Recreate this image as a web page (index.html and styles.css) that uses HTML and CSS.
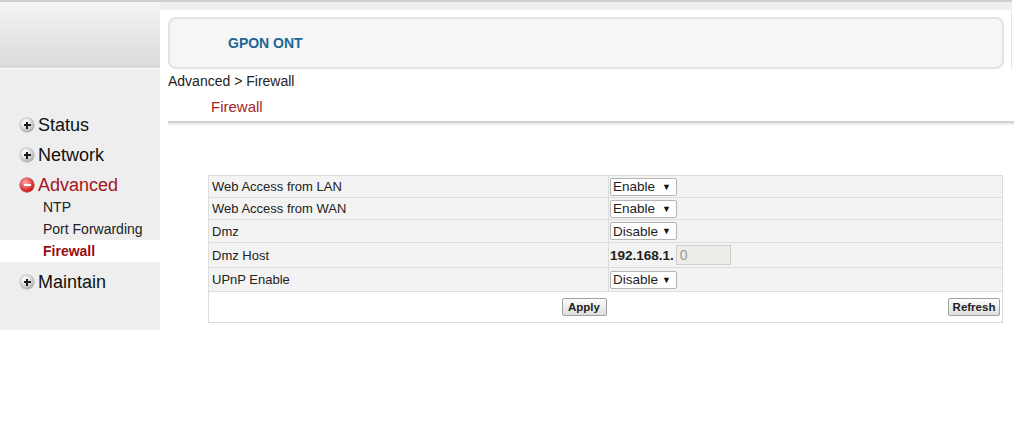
FILE: index.html
```html
<!DOCTYPE html>
<html lang="en">
<head>
  <meta charset="UTF-8" />
  <title>GPON ONT - Firewall</title>
  <link rel="stylesheet" href="styles.css">
</head>
<body>
  <div class="topstrip"></div>
  <div class="header">
    <div class="header-left"></div>
    <div class="header-panel">
      <div class="logo-box"><span class="logo">GPON ONT</span></div>
    </div>
  </div>
  <div class="page">
    <div class="sidebar">
      <ul class="menu">
        <li class="menu-item"><span class="bullet"></span>Status</li>
        <li class="menu-item"><span class="bullet"></span>Network</li>
        <li class="menu-item open"><span class="bullet minus"></span>Advanced</li>
        <li class="sub-item">NTP</li>
        <li class="sub-item">Port Forwarding</li>
        <li class="sub-item active">Firewall</li>
        <li class="menu-item"><span class="bullet"></span>Maintain</li>
      </ul>
    </div>
    <div class="main">
      <div class="crumb">Advanced &gt; Firewall</div>
      <div class="title">Firewall</div>
      <div class="title-rule"></div>

      <form class="fw-form">
        <table class="fw-table">
          <tr class="r1">
            <td class="lbl">Web Access from LAN</td>
            <td class="val"><span class="sel"><select name="lan"><option>Enable</option><option>Disable</option></select></span></td>
          </tr>
          <tr class="r2">
            <td class="lbl">Web Access from WAN</td>
            <td class="val"><span class="sel"><select name="wan"><option>Enable</option><option>Disable</option></select></span></td>
          </tr>
          <tr class="r3">
            <td class="lbl">Dmz</td>
            <td class="val"><span class="sel"><select name="dmz"><option>Disable</option><option>Enable</option></select></span></td>
          </tr>
          <tr class="r4">
            <td class="lbl">Dmz Host</td>
            <td class="val"><b class="ip">192.168.1.</b><input class="host" type="text" value="0" disabled></td>
          </tr>
          <tr class="r5">
            <td class="lbl">UPnP Enable</td>
            <td class="val"><span class="sel"><select name="upnp"><option>Disable</option><option>Enable</option></select></span></td>
          </tr>
          <tr class="btn-row">
            <td class="btn-left"><button type="button" class="btn-apply">Apply</button></td>
            <td class="btn-right"><button type="button" class="btn-refresh">Refresh</button></td>
          </tr>
        </table>
      </form>
    </div>
  </div>
</body>
</html>
```

FILE: styles.css
```css
body {
  margin: 0;
  font-family: "Liberation Sans", Arial, sans-serif;
  color: #222;
  background: #fff;
}
.topstrip {
  height: 2px;
  background: #cfcfcf;
  border-bottom: 8px solid #eeeeee;
  margin-right: 12px;
}
.header {
  display: flex;
  height: 59px;
}
.header-left {
  width: 160px;
  background: linear-gradient(#f4f4f4, #dadada);
  border-bottom: 1px solid #fff;
  margin-top: -8px;
  box-sizing: border-box;
}
.header-panel {
  width: 852px;
  background: #fff;
  border-radius: 8px 0 0 0;
  border-right: 1px solid #e6e6e6;
  padding: 7px 7px 0 8px;
  box-sizing: border-box;
}
.logo-box {
  height: 52px;
  background: #f6f6f6;
  border: 2px solid #e3e3e3;
  border-radius: 8px;
  box-sizing: border-box;
  padding-left: 58px;
  display: flex;
  align-items: center;
}
.logo {
  font-weight: bold;
  font-size: 14px;
  color: #1d6794;
}
.page {
  display: flex;
}
.sidebar {
  width: 160px;
  height: 261px;
  background: #eeeeee;
}
.menu {
  list-style: none;
  margin: 0;
  padding: 41px 0 0 0;
}
.menu-item {
  display: flex;
  align-items: center;
  font-size: 18px;
  height: 30px;
  padding-left: 20px;
  color: #111;
}
.menu-item.open {
  color: #a3151b;
  margin-bottom: -4px;
}
.bullet {
  width: 14px;
  height: 14px;
  border-radius: 50%;
  margin-right: 4px;
  background: radial-gradient(circle at 40% 35%, #f6f6f6 20%, #8f8f8f);
  box-shadow: 0 0 0 0.5px #999;
  position: relative;
}
.bullet::before,
.bullet::after {
  content: "";
  position: absolute;
  background: #1a1a1a;
  left: 3.5px;
  top: 6px;
  width: 7px;
  height: 2px;
}
.bullet::after {
  left: 6px;
  top: 3.5px;
  width: 2px;
  height: 7px;
}
.bullet.minus {
  background: radial-gradient(circle at 40% 35%, #ff9a9a 10%, #d0161c 70%, #9c0c10);
  box-shadow: 0 0 0 0.5px #a00;
}
.bullet.minus::before {
  background: #fff;
}
.bullet.minus::after {
  display: none;
}
.sub-item {
  font-size: 14px;
  height: 22px;
  line-height: 22px;
  padding-left: 43px;
  color: #222;
}
.sub-item.active {
  background: #fff;
  color: #9a0e10;
  font-weight: bold;
  margin-bottom: 5px;
}
.main {
  flex: 1;
  padding: 3px 10px 0 8px;
}
.crumb {
  font-size: 14px;
  line-height: 18px;
}
.title {
  margin-top: 8px;
  padding-left: 43px;
  font-size: 15px;
  color: #a5262a;
  line-height: 18px;
}
.title-rule {
  margin-top: 5px;
  height: 2px;
  background: #d2d2d2;
  border-bottom: 2px solid #ececec;
}
.fw-form {
  margin: 50px 0 0 40px;
  width: 795px;
}
.fw-table {
  width: 100%;
  border-collapse: collapse;
  border: 1px solid #dcdcdc;
  font-size: 13px;
}
.fw-table td {
  padding: 0 0 0 3px;
  background: #f3f3f3;
  border-bottom: 1px solid #dcdcdc;
}
.fw-table .lbl {
  width: 396px;
  border-right: 1px solid #dcdcdc;
}
.fw-table .val {
  padding-left: 1px;
}
.r1 td { height: 21px; }
.r2 td { height: 21px; }
.r3 td { height: 22px; }
.r4 td { height: 24px; }
.r5 td { height: 23px; }
.sel {
  display: inline-block;
  position: relative;
  vertical-align: middle;
}
.sel select {
  appearance: none;
  -webkit-appearance: none;
  width: 67px;
  height: 18px;
  padding: 0 0 0 2px;
  font-family: "Liberation Sans", Arial, sans-serif;
  font-size: 13.5px;
  color: #222;
  background: #fff;
  border: 1px solid #b5b5b5;
  border-radius: 2px;
}
.sel::after {
  content: "\25BC";
  position: absolute;
  right: 6px;
  top: 4px;
  font-size: 9px;
  color: #111;
  pointer-events: none;
}
.ip {
  font-weight: bold;
  font-size: 13.5px;
  vertical-align: middle;
}
.host {
  width: 55px;
  height: 20px;
  box-sizing: border-box;
  margin-left: 2px;
  padding: 0 3px;
  font-family: "Liberation Sans", Arial, sans-serif;
  font-size: 14px;
  color: #999;
  background: #ecece8;
  border: 1px solid #cfcfc8;
  vertical-align: middle;
}
.btn-row td {
  background: #fff;
  border: none;
  height: 30px;
}
.fw-table .btn-left {
  text-align: right;
  padding-right: 2px;
}
.fw-table .btn-right {
  text-align: right;
  padding-right: 2px;
}
button {
  font-family: "Liberation Sans", Arial, sans-serif;
  font-weight: bold;
  font-size: 11.5px;
  color: #222;
  height: 18px;
  padding: 0;
  background: linear-gradient(#fdfdfd, #dedede);
  border: 1px solid #a0a0a0;
  border-radius: 2px;
  cursor: pointer;
}
.btn-apply {
  width: 45px;
}
.btn-refresh {
  width: 52px;
}
```
